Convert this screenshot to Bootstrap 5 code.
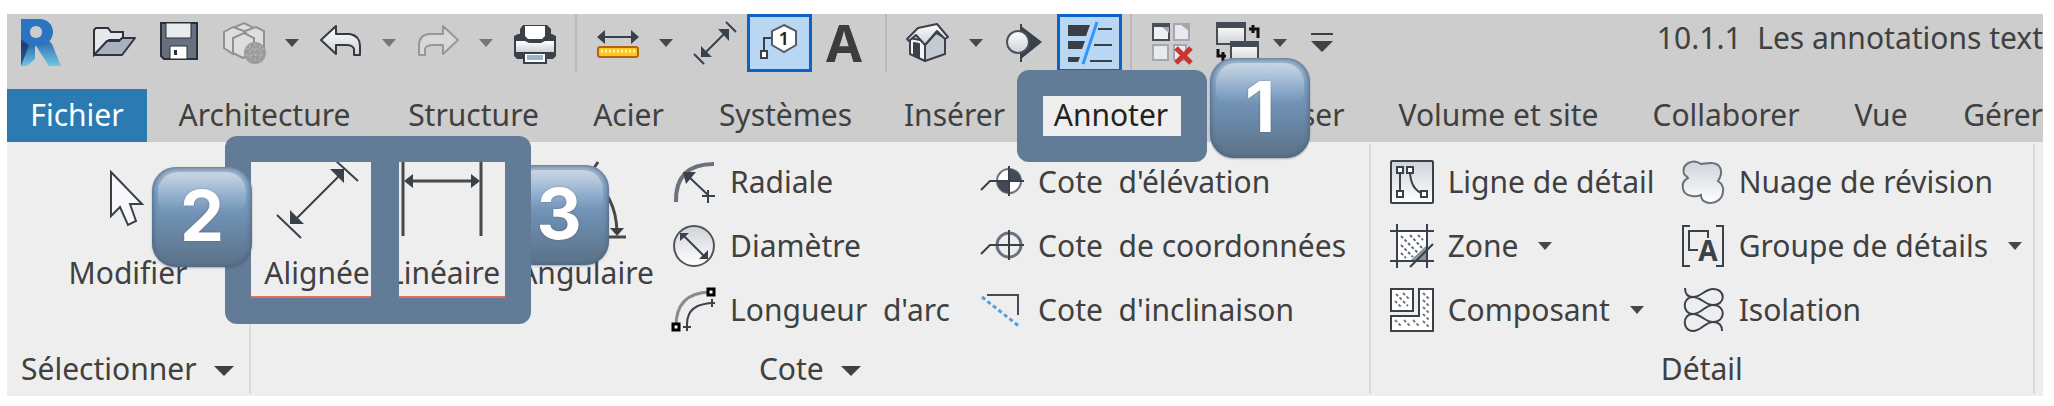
<!DOCTYPE html>
<html lang="fr">
<head>
<meta charset="utf-8">
<meta name="viewport" content="width=device-width, initial-scale=1">
<title>Revit – Annoter</title>
<link href="https://cdn.jsdelivr.net/npm/bootstrap@5.3.0/dist/css/bootstrap.min.css" rel="stylesheet">
<style>
:root { --bar:#cdcdcd; --panel:#eee; --ink:#404040; --slate:#627b96; }
body { font-family:"Noto Sans","Open Sans",sans-serif; font-size:30px; line-height:42px; color:var(--ink); background:#fff; }
button { font:inherit; color:inherit; background:none; border:0; padding:0; white-space:pre; }
svg { display:block; flex:none; overflow:visible; }
.app-window { margin:14px 11px 10px 7px; background:var(--panel); }
.quick-bar { background:var(--bar); height:75px; }
.tool, .caret, .rule { height:58px; flex:none; display:flex; align-items:center; justify-content:center; }
.tool { width:65px; }
.tool-logo { width:74px; padding-right:8px; }
.tool-on { background:#b9d6f2; border:3px solid #0a64c8; }
.caret { width:32px; }
.caret-slim { width:20px; }
.caret::after, .drop::after { content:""; border:7px solid transparent; border-top:8px solid #484848; border-bottom:0; }
.caret-dim::after { border-top-color:#777; }
.rule { width:18px; }
.rule::after { content:""; width:2px; height:58px; background:#bababa; }
.doc-title { min-width:0; overflow:hidden; white-space:pre; line-height:48px; }
.tab-bar { background:var(--bar); display:grid; height:53px; z-index:2;
  grid-template-columns:140fr 235fr 183fr 127fr 187fr 147fr 170fr 176fr 253fr 202fr 108fr 108fr; }
.tab-bar button { line-height:52px; padding-bottom:1px; min-width:0; }
.tab-file { background:#2b7ab1 !important; color:#fff !important; }
.tab-on { background:var(--panel) !important; color:#222; position:relative; }
.group { display:flex; flex-direction:column; padding-top:8px; position:relative; border-right:2px solid #dcdcdc; border-image:linear-gradient(#eee 3px,#dcdcdc 3px,#dcdcdc calc(100% - 3px),#eee calc(100% - 3px)) 1; flex-basis:0; }
.group-select { flex-grow:243; } .group-cote { flex-grow:1122; } .group-detail { flex-grow:665; }
.group-body { height:192px; }
.group-name { height:54px; line-height:54px; padding:0; }
.group-select .group-name { padding-left:14px; }
.wide-caret { line-height:52px; }
.wide-caret::after { content:""; display:inline-block; margin-left:17px; vertical-align:4px; border:10px solid transparent; border-top-color:#404040; border-bottom:0; }
.big { display:flex; flex-direction:column; align-items:center; gap:10px; padding-top:8px; position:relative; flex:none; }
.big-1 { width:132px; } .big-2 { width:122px; } .big-3 { width:162px; }
.stack { display:flex; flex-direction:column; flex:none; }
.stack-radial { width:313px; padding-left:5px; } .stack-line { width:291px; }
.group-detail .group-body { padding-left:19px; }
.stack button { display:flex; align-items:center; gap:14px; height:64px; }
.drop::after { margin-left:6px; }
.frame { position:absolute; border:26px solid var(--slate); border-radius:12px; z-index:2; }
.frame-tab { inset:-19px -11px -20px -9px; }
.frame-1 { inset:-14px -14px 18px -26px; } .frame-2 { inset:-14px -26px 18px -10px; }
.frame-1::after, .frame-2::after { content:""; position:absolute; inset:auto 0 0 0; height:2px; background:#e0705c; }
.step { position:absolute; width:100px; height:100px; border-radius:24px; color:#fff; font:700 70px/97px Inter,sans-serif; text-align:center; z-index:3;
  background:linear-gradient(#a8bed4,#7d9fc4 28%,#6f90b3 50%,#5f7890 88%,#5c748d);
  box-shadow:inset 0 0 5px 1px #4c647e, 0 1px 2px rgba(60,70,80,.4); text-shadow:0 0 2px #55606c; }
.step::before { content:""; position:absolute; inset:5px 6px auto; height:40px; border-radius:20px 20px 12px 12px; background:linear-gradient(rgba(255,255,255,.42),rgba(255,255,255,0)); }
.step-1 { left:184px; top:-31px; } .step-2 { left:-99px; top:17px; } .step-3 { left:126px; top:15px; z-index:1; }
</style>
</head>
<body>
<main class="app-window">
<svg width="0" height="0" class="position-absolute" aria-hidden="true"><defs>
  <linearGradient id="gPaper" x2="0" y2="1"><stop stop-color="#cfd3da"/><stop offset="1" stop-color="#fff"/></linearGradient>
  <linearGradient id="gSilver" x2="0" y2="1"><stop stop-color="#fff"/><stop offset="1" stop-color="#cfd1d5"/></linearGradient>
  <linearGradient id="gStem" x2="0" y2="1"><stop stop-color="#2f74c0"/><stop offset=".55" stop-color="#223f75"/><stop offset="1" stop-color="#2a5a94"/></linearGradient>
  <linearGradient id="gLeg" x2="0" y2="1"><stop stop-color="#2a6aa8"/><stop offset="1" stop-color="#74c4e4"/></linearGradient>
</defs></svg>

<div class="quick-bar d-flex align-items-start">
  <button class="tool tool-logo" aria-label="Revit"><svg width="44" height="52" viewBox="0 0 44 52"><path d="M3 3h8v43l-8 3z" fill="url(#gStem)"/><path d="M11 28l6-1v15l-8 7H3z" fill="url(#gLeg)"/><path d="M18 25l12-2 4 4 9 22H31L18 29z" fill="url(#gLeg)"/><path d="M3 2h18c9 0 14 6 14 13s-6 14-14 14h-9l-9-7zM18 9c-4 0-6 3-6 6s2 6 6 6 6-3 6-6-2-6-6-6z" fill="#2c73c2" fill-rule="evenodd"/></svg></button>
  <button class="tool" aria-label="Ouvrir"><svg width="44" height="44" viewBox="0 0 44 44"><path d="M2 34V9l2-2h12l3 4h12v8H17z" fill="#e6e8ec" stroke="#2e343c" stroke-width="2"/><path d="M2 34l13-14h12l3-3h13L30 34z" fill="#a9b1bf" stroke="#2e343c" stroke-width="2" stroke-linejoin="round"/></svg></button>
  <button class="tool" aria-label="Enregistrer"><svg width="44" height="44" viewBox="0 0 44 44"><path d="M4 2h36v36H7l-3-3z" fill="#66707f" stroke="#2a3038" stroke-width="2"/><path d="M9 2h25v15H9z" fill="#e9ecef" stroke="#2a3038"/><path d="M13 25h17v13H13z" fill="#fff" stroke="#2a3038"/><path d="M17 29h3v5h-3z" fill="#2a3038"/></svg></button>
  <button class="tool" aria-label="Synchroniser"><svg width="44" height="44" viewBox="0 0 44 44" fill="#dedede" stroke="#919191" stroke-width="2"><path d="M11 7l11-5 10 5v22H11z"/><path d="M2 11l9-5 11 4v18l-11 5-9-6z"/><path d="M23 10l11-4 8 4v16l-9 4z"/><path d="M11 17l11-5 10 5v14l-11 6-10-5z"/><circle cx="33" cy="32" r="11" fill="#9b9b9b" stroke="none"/><path d="M24 28h18M23 34h19M33 22v20M28 24v16M38 24v16" stroke="#b8b8b8" stroke-width="1" stroke-dasharray="3 2"/></svg></button>
  <button class="caret" aria-label="Options de synchronisation"></button>
  <button class="tool" aria-label="Annuler"><svg width="44" height="44" viewBox="0 0 44 44"><path d="M2 19L17 5v8h14q10 2 10 12v9h-6v-6q-1-4-8-4H17v9z" fill="url(#gSilver)" stroke="#333a43" stroke-width="2" stroke-linejoin="round"/></svg></button>
  <button class="caret caret-dim" aria-label="Historique d'annulation"></button>
  <button class="tool" aria-label="Rétablir"><svg width="44" height="44" viewBox="0 0 44 44"><path d="M42 19L27 5v8H13Q3 14 3 25v9h6v-6q1-4 8-4h10v9z" fill="#d8d8d8" stroke="#979797" stroke-width="2" stroke-linejoin="round"/></svg></button>
  <button class="caret caret-dim" aria-label="Historique de rétablissement"></button>
  <button class="tool" aria-label="Imprimer"><svg width="44" height="44" viewBox="0 0 44 44"><path d="M1 15l4-2h34l4 2v20l-3 3H4l-3-3z" fill="#39414b"/><path d="M10 4h24l4 4v9H7V8z" fill="#39414b"/><path d="M12 5h20v10l-3 3H15l-3-3z" fill="#fff"/><path d="M3 20h9l4 2h12l4-2h9v11H3z" fill="url(#gSilver)"/><path d="M11 32h22v10H11z" fill="#fff" stroke="#39414b" stroke-width="2"/><path d="M14 34h16v5H14z" fill="#9bb5c8"/></svg></button>
  <span class="rule"></span>
  <button class="tool" aria-label="Mesurer"><svg width="44" height="44" viewBox="0 0 44 44"><path d="M5 16h34" stroke="#39414b" stroke-width="2"/><path d="M1 16l8-7v14zM43 16l-8-7v14z" fill="#39414b"/><rect x="2" y="26" width="40" height="10" rx="2" fill="#ffc81e" stroke="#b0660c" stroke-width="2"/><path d="M5 30h34" stroke="#fff3b0" stroke-width="3" stroke-dasharray="2 2"/></svg></button>
  <button class="caret" aria-label="Options de mesure"></button>
  <button class="tool" aria-label="Cote alignée"><svg width="44" height="44" viewBox="0 0 44 44" stroke="#39414b" stroke-width="2"><path d="M33 1l10 10M1 33l10 10M11 33l22-22"/><path d="M36 8v12L25 8zM8 36V25l11 11z" fill="#39414b" stroke="none"/></svg></button>
  <button class="tool tool-on" aria-label="Étiquette par catégorie"><svg width="44" height="44" viewBox="0 0 44 44"><path d="M6 29V17h7" fill="none" stroke="#39414b" stroke-width="2"/><path d="M3 30h6v7H3z" fill="#fff" stroke="#39414b" stroke-width="2"/><path d="M26 4l12 6v14l-12 7-12-7V10z" fill="#fff" stroke="#555c66" stroke-width="2"/><text x="26" y="24" font-size="18" font-weight="600" text-anchor="middle" fill="#222">1</text></svg></button>
  <button class="tool" aria-label="Texte"><svg width="44" height="44" viewBox="0 0 44 44"><text x="21" y="41" font-size="52" font-weight="700" text-anchor="middle" fill="#3c3c3c">A</text></svg></button>
  <span class="rule"></span>
  <button class="tool" aria-label="Vue 3D par défaut"><svg width="44" height="44" viewBox="0 0 44 44" stroke="#39414b" stroke-width="2" stroke-linejoin="round"><path d="M4 17v16l15 7V20z" fill="#f4f4f4"/><path d="M19 40l20-7V17l-9-5-11 12z" fill="#c3cad2"/><path d="M8 34V22l5 1v14z" fill="#39414b"/><path d="M1 18L12 7l19-4 11 13-3 2-8-8-12 14-9-10-7 6z" fill="url(#gSilver)"/></svg></button>
  <button class="caret" aria-label="Options de vue 3D"></button>
  <button class="tool" aria-label="Coupe"><svg width="44" height="44" viewBox="0 0 44 44"><path d="M18 5l21 16-21 17z" fill="#39414b"/><path d="M18 3v38" stroke="#39414b" stroke-width="2"/><circle cx="15" cy="21" r="11" fill="url(#gSilver)" stroke="#4a525c" stroke-width="2"/></svg></button>
  <button class="tool tool-on" aria-label="Lignes fines"><svg width="44" height="44" viewBox="0 0 44 44"><path d="M0 4h22l-4 11H0zM0 20h17l-3 8H0zM0 36h12l-2 5H0z" fill="#3a3f46"/><path d="M30 8h14M26 24h18M22 40h22" stroke="#3a3f46" stroke-width="2"/><path d="M29 1L15 43" stroke="#2f95ff" stroke-width="3"/></svg></button>
  <span class="rule"></span>
  <button class="tool" aria-label="Fermer les vues masquées"><svg width="44" height="44" viewBox="0 0 44 44"><path d="M2 3h16v16H2z" fill="#eef0f2" stroke="#4a4e58" stroke-width="2"/><path d="M1 2h18v4H1z" fill="#4a4e58"/><path d="M23 3h15v16H23zM2 24h15v15H2zM23 24h12v15H23z" fill="#e9eaed" stroke="#a5a8b0" stroke-width="2"/><path d="M11 6h7v6zM30 4h8v6z" fill="#a5a8b0"/><path d="M25 27l15 15M40 27L25 42" stroke="#d2322d" stroke-width="5"/></svg></button>
  <button class="tool" aria-label="Changer de fenêtre"><svg width="44" height="44" viewBox="0 0 44 44"><path d="M1 3h28v20H1z" fill="url(#gSilver)" stroke="#454b55" stroke-width="2"/><path d="M0 1h30v6H0z" fill="#454b55"/><path d="M15 22h27v20H15z" fill="url(#gSilver)" stroke="#454b55" stroke-width="2"/><path d="M14 20h29v6H14z" fill="#454b55"/><path d="M33 8h9v9M37 4v8M2 28v7h8M7 31v9" fill="none" stroke="#111" stroke-width="3"/></svg></button>
  <button class="caret caret-slim" aria-label="Liste des fenêtres"></button>
  <button class="tool" aria-label="Personnaliser"><svg width="44" height="44" viewBox="0 0 44 44" fill="#404040"><path d="M10 12h22v2H10zM10 20h22L21 31z"/></svg></button>
  <div class="doc-title ms-auto">10.1.1  Les annotations text</div>
</div>

<nav class="tab-bar position-relative" aria-label="Onglets">
  <button class="tab-file">Fichier</button><button>Architecture</button><button>Structure</button><button>Acier</button><button>Systèmes</button><button class="ps-1">Insérer</button><button class="tab-on">Annoter<span class="frame frame-tab"></span><span class="step step-1">1</span></button><button>Analyser</button><button>Volume et site</button><button>Collaborer</button><button>Vue</button><button class="text-end">Gérer</button>
</nav>

<div class="d-flex pe-2">
  <section class="group group-select">
    <div class="group-body d-flex justify-content-center">
      <button class="big"><svg width="84" height="84" viewBox="0 0 84 84"><path d="M25 14v44l9-9 8 18 8-4-6-17h12z" fill="#f8f8fb" stroke="#39414b" stroke-width="2"/></svg>Modifier</button>
    </div>
    <button class="group-name wide-caret text-start">Sélectionner</button>
  </section>

  <section class="group group-cote">
    <div class="group-body d-flex">
      <button class="big big-1"><svg width="84" height="84" viewBox="0 0 84 84" stroke="#39414b" stroke-width="2"><path d="M60 2l23 21M2 57l24 23M20 62l44-44"/><path d="M69 11v14L55 11zM15 66V52l14 14z" fill="#39414b" stroke="none"/></svg>Alignée<span class="frame frame-1"></span><span class="step step-2">2</span></button>
      <button class="big big-2"><svg width="84" height="84" viewBox="0 0 84 84" stroke="#484848" stroke-width="3"><path d="M1 2v76M79 2v76M4 23h72"/><path d="M2 23l9-7v14zM78 23l-9-7v14z" fill="#39414b" stroke="none"/></svg>Linéaire<span class="frame frame-2"></span><span class="step step-3">3</span></button>
      <button class="big big-3"><svg width="84" height="84" viewBox="0 0 84 84" fill="none" stroke="#484848" stroke-width="3"><path d="M2 79h80M6 75L54 4"/><path d="M44 18Q72 36 73 74"/><path d="M73 78l-7-8h14z" fill="#404040" stroke="none"/></svg>Angulaire</button>
      <div class="stack stack-radial">
        <button><svg width="44" height="44" viewBox="0 0 44 44"><path d="M4 42Q3 4 42 4" fill="none" stroke="#6a727d" stroke-width="4"/><path d="M16 16l20 19M30 36h13M36 30v13" stroke="#39414b" stroke-width="2"/><path d="M11 12h13L14 24z" fill="#39414b"/></svg>Radiale</button>
        <button><svg width="44" height="44" viewBox="0 0 44 44"><circle cx="22" cy="22" r="20" fill="url(#gPaper)" stroke="#555" stroke-width="2"/><path d="M11 11l22 22" stroke="#39414b" stroke-width="2"/><path d="M8 9h9l-9 8zM36 35h-9l9-9z" fill="#39414b"/></svg>Diamètre</button>
        <button><svg width="44" height="44" viewBox="0 0 44 44" fill="none"><path d="M4 38Q4 5 38 4" stroke="#8b8b8b" stroke-width="3"/><path d="M15 43V36Q15 15 43 15M11 39h8M40 11v8" stroke="#39414b" stroke-width="2"/><path d="M1 36h6v6H1zM36 1h6v6h-6z" fill="#fff" stroke="#000" stroke-width="3"/></svg>Longueur  d'arc</button>
      </div>
      <div class="stack">
        <button><svg width="44" height="44" viewBox="0 0 44 44"><circle cx="29" cy="21" r="12" fill="#fff" stroke="#6a727d" stroke-width="2"/><path d="M29 21V9a12 12 0 0 1 12 12zM29 21v12a12 12 0 0 1-12-12z" fill="#444b56"/><path d="M29 6v30M44 21H10l-9 9" fill="none" stroke="#39414b" stroke-width="2"/></svg>Cote  d'élévation</button>
        <button><svg width="44" height="44" viewBox="0 0 44 44" fill="none"><circle cx="29" cy="21" r="12" stroke="#6a727d" stroke-width="3"/><path d="M29 6v30M44 21H10l-9 9" stroke="#39414b" stroke-width="2"/></svg>Cote  de coordonnées</button>
        <button><svg width="44" height="44" viewBox="0 0 44 44" fill="none"><path d="M7 7h31v20" stroke="#454b55" stroke-width="2"/><path d="M2 9l38 30" stroke="#5b9bd8" stroke-width="3" stroke-dasharray="4 3"/></svg>Cote  d'inclinaison</button>
      </div>
    </div>
    <button class="group-name wide-caret">Cote</button>
  </section>

  <section class="group group-detail">
    <div class="group-body d-flex">
      <div class="stack stack-line">
        <button><svg width="44" height="44" viewBox="0 0 44 44" stroke="#39414b" stroke-width="2"><rect x="1" y="1" width="42" height="42" rx="1" fill="url(#gPaper)"/><path d="M10 10v24M20 10q0 20 14 24" fill="none"/><path d="M7 7h6v6H7zM17 7h6v6h-6zM7 31h6v6H7zM31 31h6v6h-6z" fill="#fff"/></svg>Ligne de détail</button>
        <button class="drop"><svg width="44" height="44" viewBox="0 0 44 44" stroke="#39414b" stroke-width="2"><path d="M7 7h30v30H7z" fill="#fff"/><path d="M11 12l20 20M11 21l12 12M20 11l12 13M11 29l5 5M28 11l5 5" stroke-dasharray="3 2" stroke="#666d78"/><path d="M38 20v17H20z" fill="#8d929b" stroke="none"/><path d="M7 0v44M37 0v44M0 7h44M0 37h44M20 43l23-23"/></svg>Zone</button>
        <button class="drop"><svg width="44" height="44" viewBox="0 0 44 44" stroke="#39414b" stroke-width="2" fill="#fff"><path d="M1 1h22v22H1zM29 1h14v42H1V28h28z"/><path d="M6 6l12 12M13 5l6 6M5 13l6 6M33 5l6 6M33 12l6 6M33 19l6 6M33 26l6 6M33 33l6 6M5 32l6 6M14 32l6 6M23 32l6 6" stroke="#777" stroke-dasharray="3 2"/></svg>Composant</button>
      </div>
      <div class="stack">
        <button><svg width="44" height="44" viewBox="0 0 44 44"><path d="M20 4C12-2 0 4 3 14c2 3 3 2 4 4-8 4-7 17 4 18 5 1 7 0 9-1 0 12 21 10 22-3 1-6-2-9-5-11C43 12 40 3 30 3c-5 0-7 1-10 1z" fill="url(#gPaper)" stroke="#6a707a" stroke-width="2"/></svg>Nuage de révision</button>
        <button class="drop"><svg width="44" height="44" viewBox="0 0 44 44" fill="none" stroke="#39414b" stroke-width="2"><path d="M9 2H2v40h7M35 2h7v40h-7M17 26H8V7h19v7"/><text x="27" y="37" font-size="28" font-weight="700" text-anchor="middle" fill="#39414b" stroke="none">A</text></svg>Groupe de détails</button>
        <button><svg width="44" height="44" viewBox="0 0 44 44" fill="none" stroke="#39414b" stroke-width="2"><path d="M4 0Q4 9 12 9C20 9 24 1 32 1C45 1 45 17 32 17C24 17 20 9 12 9C1 9 1 26 12 26C20 26 24 17 32 17C45 17 45 34 32 34C24 34 20 26 12 26C1 26 1 43 12 43C20 43 24 34 32 34Q41 34 41 43"/></svg>Isolation</button>
      </div>
    </div>
    <div class="group-name text-center">Détail</div>
  </section>
</div>
</main>
<script src="https://cdn.jsdelivr.net/npm/bootstrap@5.3.0/dist/js/bootstrap.bundle.min.js"></script>
</body>
</html>
